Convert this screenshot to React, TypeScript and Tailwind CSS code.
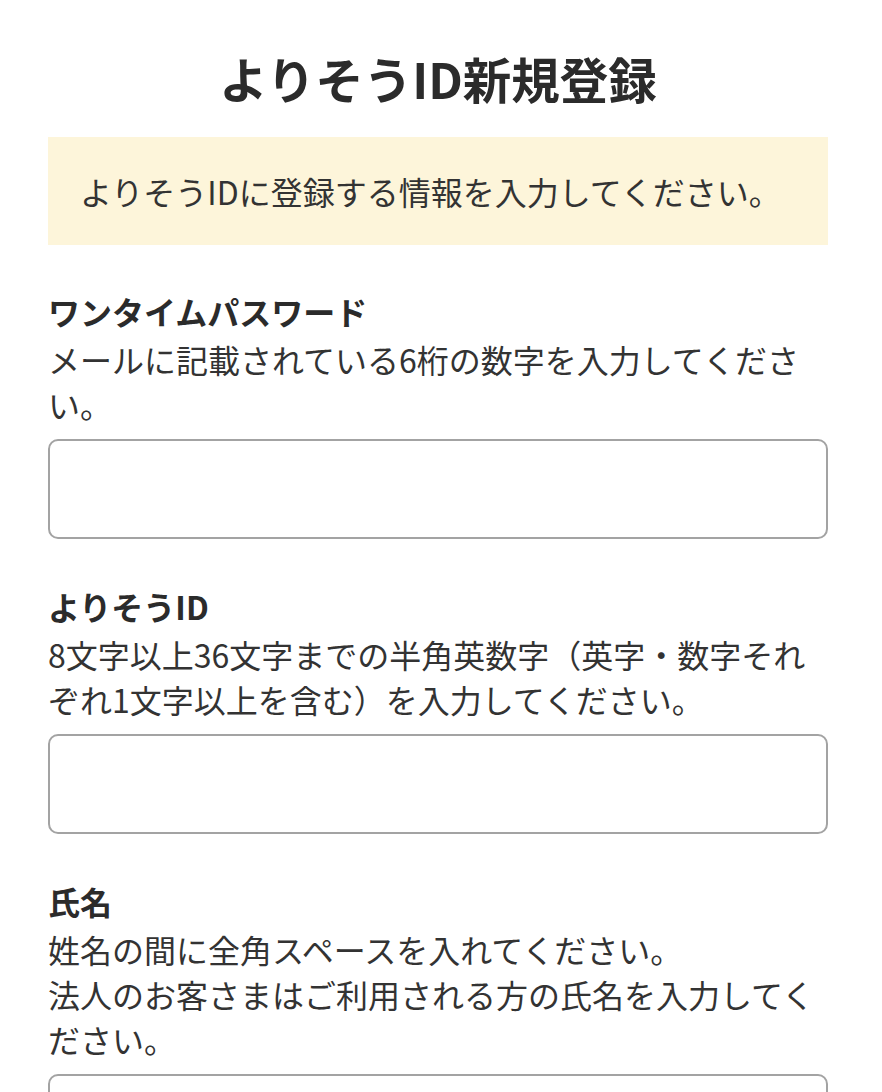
import React from "react";

const font = { fontFamily: '"Noto Sans CJK JP", "Noto Sans", sans-serif' };

interface FieldProps {
  label: string;
  lines: string[];
}

function Field({ label, lines }: FieldProps) {
  return (
    <div className="flex flex-col">
      <label className="text-[32px] leading-[44px] font-bold text-[#2b2b2b]">{label}</label>
      <p className="mt-1 text-[32px] leading-[45px] text-[#333]">
        {lines.map((l, i) => (
          <React.Fragment key={i}>
            {i > 0 && <br />}
            {l}
          </React.Fragment>
        ))}
      </p>
      <input
        type="text"
        className="mt-3 h-[100px] w-full rounded-[10px] border-2 border-[#a3a3a3] bg-white px-4 text-[32px] outline-none"
      />
    </div>
  );
}

export default function App() {
  return (
    <div className="min-h-screen bg-white text-[#333]" style={font}>
      <div className="ml-[48px] w-[780px] pt-[42px] pb-10">
        <h1 className="text-center text-[48.5px] leading-[72px] font-bold text-[#2b2b2b]">
          よりそうID新規登録
        </h1>

        <div className="mt-[23px] bg-[#fdf5da] px-8 py-8">
          <p className="text-[32px] leading-[44px] text-[#333]">
            よりそうIDに登録する情報を入力してください。
          </p>
        </div>

        <div className="mt-[44px] flex flex-col gap-[45px]">
          <Field
            label="ワンタイムパスワード"
            lines={["メールに記載されている6桁の数字を入力してください。"]}
          />
          <Field
            label="よりそうID"
            lines={["8文字以上36文字までの半角英数字（英字・数字それぞれ1文字以上を含む）を入力してください。"]}
          />
          <Field
            label="氏名"
            lines={[
              "姓名の間に全角スペースを入れてください。",
              "法人のお客さまはご利用される方の氏名を入力してください。",
            ]}
          />
        </div>
      </div>
    </div>
  );
}
